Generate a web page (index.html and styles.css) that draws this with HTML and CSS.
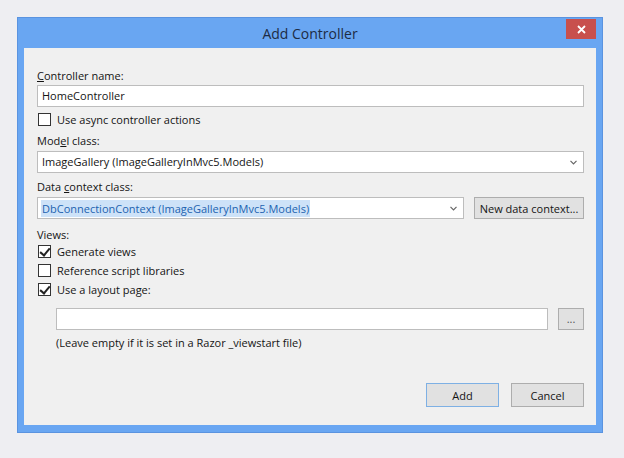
FILE: index.html
```html
<!DOCTYPE html>
<html lang="en">
<head>
  <meta charset="UTF-8">
  <title>Add Controller</title>
  <link rel="stylesheet" href="styles.css">
</head>
<body>
  <div class="window">
    <div class="titlebar">
      <span class="title">Add Controller</span>
      <button class="close" type="button">
        <svg width="9" height="9" viewBox="0 0 9 9"><path d="M1 1 L8 8 M8 1 L1 8" stroke="#fff" stroke-width="1.8"/></svg>
      </button>
    </div>

    <div class="client">
      <div class="field-label"><u>C</u>ontroller name:</div>
      <div class="textbox">HomeController</div>

      <div class="check-row first"><span class="checkbox"></span>Use async controller actions</div>

      <div class="field-label model"><span>Mod<u>e</u>l class:</span></div>
      <div class="combo">
        <span>ImageGallery (ImageGalleryInMvc5.Models)</span>
        <svg class="arrow" width="7" height="5" viewBox="0 0 7 5"><path d="M0.5 0.8 L3.5 3.8 L6.5 0.8" fill="none" stroke="#666" stroke-width="1.2"/></svg>
      </div>

      <div class="field-label context">Data <u>c</u>ontext class:</div>
      <div class="combo-row">
        <div class="combo">
          <span class="selected">DbConnectionContext (ImageGalleryInMvc5.Models)</span>
          <svg class="arrow" width="7" height="5" viewBox="0 0 7 5"><path d="M0.5 0.8 L3.5 3.8 L6.5 0.8" fill="none" stroke="#666" stroke-width="1.2"/></svg>
        </div>
        <button class="btn new-context" type="button">New data context...</button>
      </div>

      <div class="field-label views">Views:</div>
      <div class="check-list">
        <div class="check-row"><span class="checkbox checked"></span>Generate views</div>
        <div class="check-row"><span class="checkbox"></span>Reference script libraries</div>
        <div class="check-row"><span class="checkbox checked"></span>Use a layout page:</div>
      </div>

      <div class="layout-row">
        <div class="textbox"></div>
        <button class="btn browse" type="button">...</button>
      </div>
      <div class="hint">(Leave empty if it is set in a Razor _viewstart file)</div>

      <div class="actions">
        <button class="btn default" type="button">Add</button>
        <button class="btn" type="button">Cancel</button>
      </div>
    </div>
  </div>
</body>
</html>
```

FILE: styles.css
```css
* {
  box-sizing: border-box;
  margin: 0;
  padding: 0;
}

body {
  background-color: #eeeef2;
  font-family: "Segoe UI", "Open Sans", sans-serif;
  font-size: 11px;
  color: #141414;
}

.window {
  width: 586px;
  height: 416px;
  margin: 17px 0 0 17px;
  background-color: #69a6f2;
  border: 1px solid #5a93e0;
  padding: 0 6px 7px 6px;
  display: flex;
  flex-direction: column;
}

.titlebar {
  position: relative;
  height: 30px;
  flex-shrink: 0;
  text-align: center;
}

.title {
  display: inline-block;
  font-size: 14px;
  line-height: 32px;
  color: #1d2c44;
}

.close {
  position: absolute;
  top: 1px;
  right: 0;
  width: 30px;
  height: 20px;
  background-color: #c8504d;
  border: none;
  display: flex;
  align-items: center;
  justify-content: center;
}

.client {
  flex: 1;
  background-color: #f0f0f0;
  padding: 20px 12px 18px 13px;
  display: flex;
  flex-direction: column;
}

.field-label {
  height: 16px;
  line-height: 16px;
}

.field-label.model {
  margin-top: 6px;
}

.field-label.context {
  margin-top: 6px;
}

.field-label.views {
  margin-top: 9px;
  height: 14px;
  line-height: 14px;
}

u {
  text-decoration: underline;
  text-underline-offset: 1px;
}

.textbox,
.combo {
  height: 22px;
  margin-top: 1px;
  background-color: #fff;
  border: 1px solid #bdbdbd;
  padding: 0 4px;
  line-height: 20px;
}

.combo {
  margin-top: 2px;
  display: flex;
  align-items: center;
  justify-content: space-between;
}

.combo .arrow {
  margin-right: 2px;
}

.selected {
  background-color: #cde2f8;
  color: #2262b0;
  padding: 0 1px;
  margin-left: -1px;
  line-height: 17px;
}

.check-row {
  height: 19px;
  display: flex;
  align-items: center;
  padding-left: 1px;
}

.check-row.first {
  height: 16px;
  margin-top: 4px;
}

.checkbox {
  width: 13px;
  height: 13px;
  margin-right: 6px;
  border: 1px solid #333;
  background-color: #fff;
  position: relative;
  flex-shrink: 0;
}

.checkbox.checked::after {
  content: "";
  position: absolute;
  left: 3px;
  top: 0px;
  width: 4px;
  height: 8px;
  border: solid #222;
  border-width: 0 2px 2px 0;
  transform: rotate(40deg);
}

.combo-row {
  display: flex;
  gap: 10px;
  margin-top: 2px;
}

.combo-row .combo {
  flex: 1;
  margin-top: 0;
}

.btn {
  font-family: inherit;
  font-size: 11px;
  color: #141414;
  background-color: #e1e1e1;
  border: 1px solid #adadad;
}

.new-context {
  width: 110px;
  height: 22px;
}

.layout-row {
  display: flex;
  gap: 10px;
  margin-top: 9px;
  margin-left: 19px;
}

.layout-row .textbox {
  flex: 1;
  margin-top: 0;
}

.browse {
  width: 26px;
  height: 22px;
  line-height: 14px;
  color: #555;
}

.hint {
  margin-top: 5px;
  margin-left: 19px;
  line-height: 16px;
}

.actions {
  margin-top: auto;
  display: flex;
  justify-content: flex-end;
  gap: 12px;
}

.actions .btn {
  width: 73px;
  height: 24px;
}

.btn.default {
  border-color: #7eb0e4;
}
```
